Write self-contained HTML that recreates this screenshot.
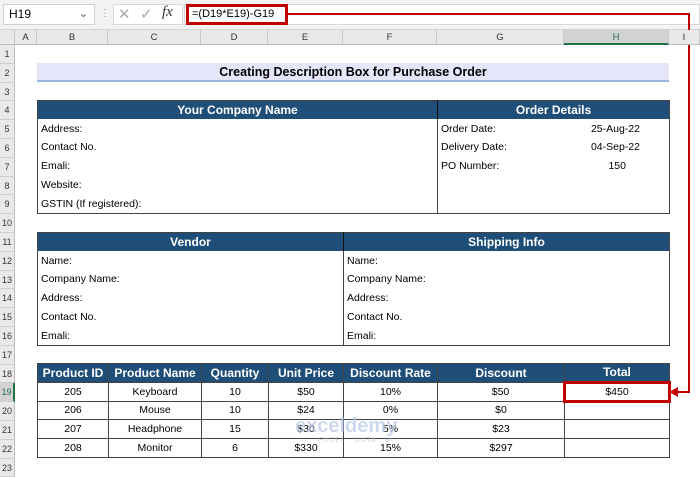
<!DOCTYPE html>
<html><head><meta charset="utf-8"><style>
*{margin:0;padding:0;box-sizing:border-box}
body{width:700px;height:465px;overflow:hidden;background:#fff;font-family:"Liberation Sans",Arial,sans-serif;font-size:10.5px;color:#000;position:relative}
.a{position:absolute}
.top{left:0;top:0;width:700px;height:30px;background:#f3f3f3;border-bottom:1px solid #d4d4d4}
.colh{top:30px;height:15px;background:#e9e9e9;border-right:1px solid #c8c8c8;border-bottom:1px solid #bdbdbd;text-align:center;font-size:9.5px;line-height:15px;color:#333}
.rowh{left:0;width:15px;background:#e9e9e9;border-bottom:1px solid #cfcfcf;border-right:1px solid #bdbdbd;text-align:center;font-size:9px;color:#333}
table{position:absolute;border-collapse:collapse;table-layout:fixed}
td{height:18.8px;padding:0 3px;white-space:nowrap;overflow:hidden;font-size:10.5px}
.h td{background:#1f4e79;color:#fff;font-weight:bold;text-align:center;font-size:12px}
.box{border:1px solid #444}
.grid td{border:1px solid #444;text-align:center}
</style></head><body>
<div class="a top"></div>
<div class="a" style="left:3px;top:4px;width:92px;height:21px;background:#fff;border:1px solid #d0d0d0;font-size:12px;line-height:19px;padding-left:5px">H19<span style="position:absolute;right:6px;top:0;font-size:11px;color:#555">⌄</span></div>
<div class="a" style="left:100px;top:8px;color:#999;font-size:10px">⋮</div>
<div class="a" style="left:113px;top:4px;width:70px;height:21px;background:#fff;border:1px solid #d8d8d8"></div>
<div class="a" style="left:118px;top:5px;color:#aaa;font-size:15px">✕</div>
<div class="a" style="left:140px;top:5px;color:#aaa;font-size:15px">✓</div>
<div class="a" style="left:162px;top:4px;font-family:'Liberation Serif',serif;font-style:italic;font-size:15px;color:#333">fx</div>
<div class="a" style="left:184px;top:4px;width:516px;height:21px;background:#fff;border:1px solid #d8d8d8"></div>
<div class="a" style="left:186px;top:4px;width:102px;height:21px;border:3px solid #c00000;font-size:11px;line-height:15px;padding-left:3px;white-space:nowrap;overflow:hidden">=(D19*E19)-G19</div>
<div class="a" style="left:288px;top:13px;width:402px;height:2px;background:#c00000"></div>
<div class="a" style="left:688px;top:13px;width:2px;height:380px;background:#c00000"></div>
<div class="a" style="left:676px;top:391px;width:13px;height:2px;background:#c00000"></div>
<div class="a" style="left:669px;top:387px;width:0;height:0;border-top:5px solid transparent;border-bottom:5px solid transparent;border-right:9px solid #c00000"></div>

<div class="a colh" style="left:0;width:15px"></div>
<div class="a colh" style="left:15px;width:22px">A</div>
<div class="a colh" style="left:37px;width:71px">B</div>
<div class="a colh" style="left:108px;width:93px">C</div>
<div class="a colh" style="left:201px;width:67px">D</div>
<div class="a colh" style="left:268px;width:75px">E</div>
<div class="a colh" style="left:343px;width:94px">F</div>
<div class="a colh" style="left:437px;width:127px">G</div>
<div class="a colh" style="left:564px;width:105px;background:#d2d2d2;border-bottom:2px solid #217346;color:#217346">H</div>
<div class="a colh" style="left:669px;width:31px">I</div>

<div class="a rowh" style="top:45px;height:18.8px;line-height:18.8px">1</div>
<div class="a rowh" style="top:63.8px;height:18.8px;line-height:18.8px">2</div>
<div class="a rowh" style="top:82.6px;height:18.8px;line-height:18.8px">3</div>
<div class="a rowh" style="top:101.4px;height:18.8px;line-height:18.8px">4</div>
<div class="a rowh" style="top:120.2px;height:18.8px;line-height:18.8px">5</div>
<div class="a rowh" style="top:139px;height:18.8px;line-height:18.8px">6</div>
<div class="a rowh" style="top:157.8px;height:18.8px;line-height:18.8px">7</div>
<div class="a rowh" style="top:176.6px;height:18.8px;line-height:18.8px">8</div>
<div class="a rowh" style="top:195.4px;height:18.8px;line-height:18.8px">9</div>
<div class="a rowh" style="top:214.2px;height:18.8px;line-height:18.8px">10</div>
<div class="a rowh" style="top:233px;height:18.8px;line-height:18.8px">11</div>
<div class="a rowh" style="top:251.8px;height:18.8px;line-height:18.8px">12</div>
<div class="a rowh" style="top:270.6px;height:18.8px;line-height:18.8px">13</div>
<div class="a rowh" style="top:289.4px;height:18.8px;line-height:18.8px">14</div>
<div class="a rowh" style="top:308.2px;height:18.8px;line-height:18.8px">15</div>
<div class="a rowh" style="top:327px;height:18.8px;line-height:18.8px">16</div>
<div class="a rowh" style="top:345.8px;height:18.8px;line-height:18.8px">17</div>
<div class="a rowh" style="top:364.6px;height:18.8px;line-height:18.8px">18</div>
<div class="a rowh" style="top:383.4px;height:18.8px;line-height:18.8px;background:#d2d2d2;border-right:2px solid #217346;color:#217346">19</div>
<div class="a rowh" style="top:402.2px;height:18.8px;line-height:18.8px">20</div>
<div class="a rowh" style="top:421px;height:18.8px;line-height:18.8px">21</div>
<div class="a rowh" style="top:439.8px;height:18.8px;line-height:18.8px">22</div>
<div class="a rowh" style="top:458.6px;height:18.8px;line-height:18.8px">23</div>

<div class="a" style="left:37px;top:63px;width:632px;height:19px;background:#e6e6fa;border-bottom:2px solid #9db6e0;text-align:center;font-weight:bold;font-size:12.5px;line-height:18px">Creating Description Box for Purchase Order</div>

<table class="box" style="left:37px;top:100px;width:632px">
<colgroup><col style="width:400px"><col style="width:232px"></colgroup>
<tr class="h"><td>Your Company Name</td><td style="border-left:1px solid #111">Order Details</td></tr>
<tr><td>Address:</td><td style="border-left:1px solid #444">Order Date:<span style="float:right;margin-right:26px">25-Aug-22</span></td></tr>
<tr><td>Contact No.</td><td style="border-left:1px solid #444">Delivery Date:<span style="float:right;margin-right:26px">04-Sep-22</span></td></tr>
<tr><td>Emali:</td><td style="border-left:1px solid #444">PO Number:<span style="float:right;margin-right:40px">150</span></td></tr>
<tr><td>Website:</td><td style="border-left:1px solid #444"></td></tr>
<tr><td>GSTIN (If registered):</td><td style="border-left:1px solid #444"></td></tr>
</table>

<table class="box" style="left:37px;top:232px;width:632px">
<colgroup><col style="width:306px"><col style="width:326px"></colgroup>
<tr class="h"><td>Vendor</td><td style="border-left:1px solid #111">Shipping Info</td></tr>
<tr><td>Name:</td><td style="border-left:1px solid #444">Name:</td></tr>
<tr><td>Company Name:</td><td style="border-left:1px solid #444">Company Name:</td></tr>
<tr><td>Address:</td><td style="border-left:1px solid #444">Address:</td></tr>
<tr><td>Contact No.</td><td style="border-left:1px solid #444">Contact No.</td></tr>
<tr><td>Emali:</td><td style="border-left:1px solid #444">Emali:</td></tr>
</table>

<table class="grid" style="left:37px;top:363px;width:632px">
<colgroup><col style="width:71px"><col style="width:93px"><col style="width:67px"><col style="width:75px"><col style="width:94px"><col style="width:127px"><col style="width:105px"></colgroup>
<tr class="h"><td>Product ID</td><td>Product Name</td><td>Quantity</td><td>Unit Price</td><td>Discount Rate</td><td>Discount</td><td>Total</td></tr>
<tr><td>205</td><td>Keyboard</td><td>10</td><td>$50</td><td>10%</td><td>$50</td><td style="border:3px solid #c00000">$450</td></tr>
<tr><td>206</td><td>Mouse</td><td>10</td><td>$24</td><td>0%</td><td>$0</td><td></td></tr>
<tr><td>207</td><td>Headphone</td><td>15</td><td>$30</td><td>5%</td><td>$23</td><td></td></tr>
<tr><td>208</td><td>Monitor</td><td>6</td><td>$330</td><td>15%</td><td>$297</td><td></td></tr>
</table>
<div class="a" style="left:295px;top:415px;color:#b8c8e8;font-size:20px;font-weight:bold;opacity:.7">exceldemy</div>
<div class="a" style="left:318px;top:437px;color:#c0c8d8;font-size:7px;letter-spacing:1px;opacity:.8">EXCEL · DATA · BI</div>
</body></html>
